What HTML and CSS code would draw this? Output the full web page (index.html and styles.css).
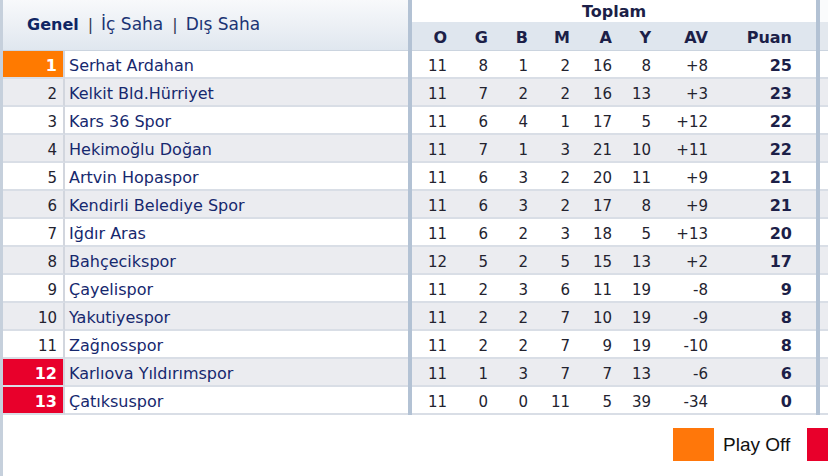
FILE: index.html
```html
<!DOCTYPE html>
<html lang="tr">
<head>
<meta charset="utf-8">
<title>Puan Durumu</title>
<link rel="stylesheet" href="styles.css">
</head>
<body>
<div class="page">
  <div class="grid">
    <div class="tabs"><span class="tab on">Genel</span><span class="sep">|</span><span class="tab">İç Saha</span><span class="sep">|</span><span class="tab">Dış Saha</span></div>
    <div class="dv dv1"></div>
    <div class="toplam">Toplam</div>
    <div class="dv dv2"></div>
    <div class="edge-top"></div>
    <div class="hl h1">O</div>
    <div class="hl h2">G</div>
    <div class="hl h3">B</div>
    <div class="hl h4">M</div>
    <div class="hl h5">A</div>
    <div class="hl h6">Y</div>
    <div class="hl h7">AV</div>
    <div class="hl h8">Puan</div>
    <div class="hl h9"></div>
    <div class="edge-head"></div>

    <div class="row"><div class="c rk po">1</div><div class="c nm">Serhat Ardahan</div><div class="c n">11</div><div class="c n">8</div><div class="c n">1</div><div class="c n">2</div><div class="c n">16</div><div class="c n">8</div><div class="c n">+8</div><div class="c n pt">25</div><div class="c"></div><div class="c"></div></div>
    <div class="row alt"><div class="c rk">2</div><div class="c nm">Kelkit Bld.Hürriyet</div><div class="c n">11</div><div class="c n">7</div><div class="c n">2</div><div class="c n">2</div><div class="c n">16</div><div class="c n">13</div><div class="c n">+3</div><div class="c n pt">23</div><div class="c"></div><div class="c"></div></div>
    <div class="row"><div class="c rk">3</div><div class="c nm">Kars 36 Spor</div><div class="c n">11</div><div class="c n">6</div><div class="c n">4</div><div class="c n">1</div><div class="c n">17</div><div class="c n">5</div><div class="c n">+12</div><div class="c n pt">22</div><div class="c"></div><div class="c"></div></div>
    <div class="row alt"><div class="c rk">4</div><div class="c nm">Hekimoğlu Doğan</div><div class="c n">11</div><div class="c n">7</div><div class="c n">1</div><div class="c n">3</div><div class="c n">21</div><div class="c n">10</div><div class="c n">+11</div><div class="c n pt">22</div><div class="c"></div><div class="c"></div></div>
    <div class="row"><div class="c rk">5</div><div class="c nm">Artvin Hopaspor</div><div class="c n">11</div><div class="c n">6</div><div class="c n">3</div><div class="c n">2</div><div class="c n">20</div><div class="c n">11</div><div class="c n">+9</div><div class="c n pt">21</div><div class="c"></div><div class="c"></div></div>
    <div class="row alt"><div class="c rk">6</div><div class="c nm">Kendirli Belediye Spor</div><div class="c n">11</div><div class="c n">6</div><div class="c n">3</div><div class="c n">2</div><div class="c n">17</div><div class="c n">8</div><div class="c n">+9</div><div class="c n pt">21</div><div class="c"></div><div class="c"></div></div>
    <div class="row"><div class="c rk">7</div><div class="c nm">Iğdır Aras</div><div class="c n">11</div><div class="c n">6</div><div class="c n">2</div><div class="c n">3</div><div class="c n">18</div><div class="c n">5</div><div class="c n">+13</div><div class="c n pt">20</div><div class="c"></div><div class="c"></div></div>
    <div class="row alt"><div class="c rk">8</div><div class="c nm">Bahçecikspor</div><div class="c n">12</div><div class="c n">5</div><div class="c n">2</div><div class="c n">5</div><div class="c n">15</div><div class="c n">13</div><div class="c n">+2</div><div class="c n pt">17</div><div class="c"></div><div class="c"></div></div>
    <div class="row"><div class="c rk">9</div><div class="c nm">Çayelispor</div><div class="c n">11</div><div class="c n">2</div><div class="c n">3</div><div class="c n">6</div><div class="c n">11</div><div class="c n">19</div><div class="c n">-8</div><div class="c n pt">9</div><div class="c"></div><div class="c"></div></div>
    <div class="row alt"><div class="c rk">10</div><div class="c nm">Yakutiyespor</div><div class="c n">11</div><div class="c n">2</div><div class="c n">2</div><div class="c n">7</div><div class="c n">10</div><div class="c n">19</div><div class="c n">-9</div><div class="c n pt">8</div><div class="c"></div><div class="c"></div></div>
    <div class="row"><div class="c rk">11</div><div class="c nm">Zağnosspor</div><div class="c n">11</div><div class="c n">2</div><div class="c n">2</div><div class="c n">7</div><div class="c n">9</div><div class="c n">19</div><div class="c n">-10</div><div class="c n pt">8</div><div class="c"></div><div class="c"></div></div>
    <div class="row alt"><div class="c rk rel">12</div><div class="c nm">Karlıova Yıldırımspor</div><div class="c n">11</div><div class="c n">1</div><div class="c n">3</div><div class="c n">7</div><div class="c n">7</div><div class="c n">13</div><div class="c n">-6</div><div class="c n pt">6</div><div class="c"></div><div class="c"></div></div>
    <div class="row"><div class="c rk rel">13</div><div class="c nm">Çatıksuspor</div><div class="c n">11</div><div class="c n">0</div><div class="c n">0</div><div class="c n">11</div><div class="c n">5</div><div class="c n">39</div><div class="c n">-34</div><div class="c n pt">0</div><div class="c"></div><div class="c"></div></div>
  </div>
  <div class="legend">
    <span class="sw sw-po"></span><span class="lg-text">Play Off</span><span class="sw sw-rel"></span>
  </div>
</div>
</body>
</html>
```

FILE: styles.css
```css
html, body {
  margin: 0;
  padding: 0;
  background: #ffffff;
}
body {
  width: 828px;
  height: 476px;
  overflow: hidden;
}
.page {
  width: 825px;
  height: 476px;
  border-left: 3px solid #c6d0dc;
  font-family: "DejaVu Sans", Verdana, sans-serif;
  color: #23232f;
}
.grid {
  display: grid;
  grid-template-columns: 62px 343px 4px 40px 41px 40px 42px 42px 39px 57px 84px 19px 4px 8px;
  grid-template-rows: 22px 29px repeat(13, 28px);
}
.tabs {
  grid-column: 1 / 3;
  grid-row: 1 / 3;
  display: flex;
  align-items: center;
  padding-left: 24px;
  padding-bottom: 2px;
  box-sizing: border-box;
  background: linear-gradient(#f8f9fb, #e0e7ef);
  border-bottom: 1px solid #cbd4df;
  font-size: 17px;
  color: #1b3474;
}
.tab.on {
  font-weight: bold;
  font-size: 16px;
  color: #0f2563;
}
.sep {
  font-size: 16px;
  margin: 0 8px 0 9px;
  color: #333a55;
}
.dv {
  background: #b3c2d4;
  grid-row: 1 / 16;
}
.dv1 { grid-column: 3; }
.dv2 { grid-column: 13; }
.toplam {
  grid-column: 4 / 13;
  grid-row: 1;
  text-align: center;
  font-weight: bold;
  font-size: 16px;
  line-height: 23px;
  color: #1c1f48;
  background: #ffffff;
}
.edge-top {
  grid-column: 14;
  grid-row: 1;
  background: #fafbfc;
}
.hl {
  grid-row: 2;
  background: #dfe6ee;
  border-bottom: 1px solid #cbd4df;
  font-weight: bold;
  font-size: 16px;
  color: #1c1f48;
  text-align: right;
  padding-right: 5px;
  line-height: 32px;
  overflow: hidden;
}
.h1 { grid-column: 4; }
.h2 { grid-column: 5; }
.h3 { grid-column: 6; }
.h4 { grid-column: 7; }
.h5 { grid-column: 8; }
.h6 { grid-column: 9; }
.h7 { grid-column: 10; }
.h8 { grid-column: 11; }
.h9 { grid-column: 12; }
.edge-head {
  grid-column: 14;
  grid-row: 2;
  background: #e3e8ee;
  border-bottom: 1px solid #cbd4df;
}
.row {
  display: contents;
}
.c {
  background: #ffffff;
  border-bottom: 2px solid #d9dee6;
  font-size: 15px;
  line-height: 30px;
  white-space: nowrap;
  overflow: hidden;
}
.alt > .c {
  background: #ebecf0;
}
.rk {
  text-align: right;
  padding-right: 6px;
  border-right: 2px solid #d2d6de;
  color: #23232f;
}
.rk.po, .rk.rel {
  color: #ffffff;
  font-weight: bold;
  font-size: 16px;
}
.row > .rk.po { background: #ff7a00; }
.row > .rk.rel { background: #e8002b; }
.nm {
  padding-left: 4px;
  font-size: 16px;
  color: #16286e;
}
.n {
  text-align: right;
  padding-right: 5px;
}
.pt {
  font-weight: bold;
  font-size: 16px;
  color: #1c1f48;
}
.legend {
  display: flex;
  align-items: center;
  padding-top: 13px;
  padding-left: 670px;
  font-family: "Liberation Sans", Arial, sans-serif;
}
.sw {
  flex: none;
  width: 41px;
  height: 33px;
}
.sw-po { background: #ff770a; }
.sw-rel { background: #e8002b; }
.lg-text {
  font-size: 19px;
  color: #111111;
  margin: 0 17px 0 9px;
  white-space: nowrap;
}
```
